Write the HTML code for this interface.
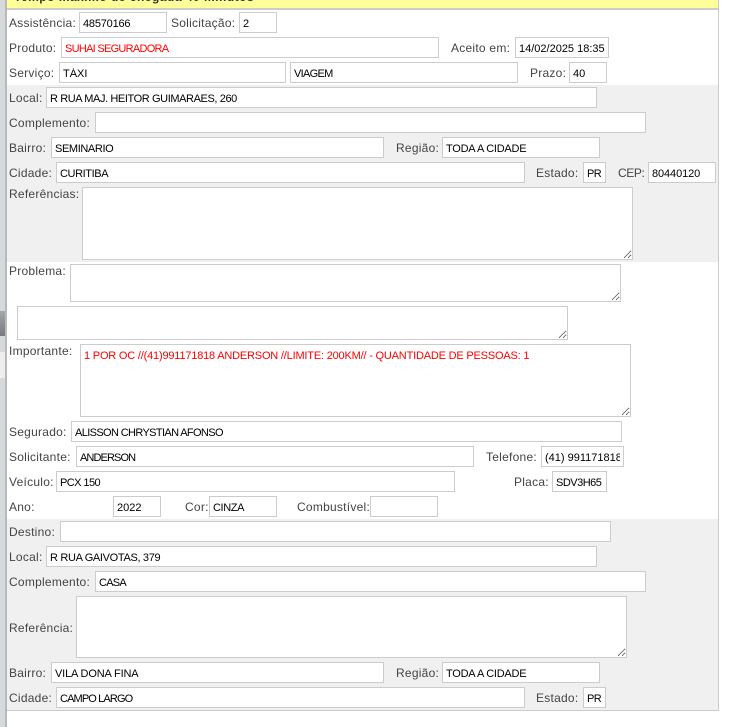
<!DOCTYPE html>
<html lang="pt-BR"><head><meta charset="utf-8"><title>Assistência</title>
<style>
html,body{margin:0;padding:0;width:749px;height:727px;overflow:hidden;background:#fff}
body{position:relative;font:12px "Liberation Sans",sans-serif;color:#444}
div,label,input,textarea{position:absolute;box-sizing:border-box}
label{white-space:nowrap;line-height:14px;letter-spacing:.25px}
input,textarea{margin:0;border:1px solid #ccc;background:#fff;color:#000;font:11px "Liberation Sans",sans-serif;padding:2px 3px 0;outline:0;border-radius:0}
textarea{padding:5px 3px 3px;resize:both;overflow:hidden}
.r{color:#f00}
</style></head><body>
<div style="left:0;top:0;width:5px;height:727px;background:#d6dadc"></div>
<div style="left:5px;top:0;width:2px;height:727px;background:#b9b9b9"></div>
<div style="left:0;top:311px;width:5px;height:25px;background:linear-gradient(#a4a8ad,#767a80)"></div>
<div style="left:0;top:352px;width:5px;height:26px;background:#eee"></div>
<div style="left:718px;top:0;width:1px;height:711px;background:#ccc"></div>
<div style="left:7px;top:0;width:711px;height:8px;background:#ff9;overflow:hidden"><div style="left:7px;top:-10px;font-weight:bold;font-size:12px;line-height:14px;white-space:nowrap;color:#333;letter-spacing:.5px">Tempo máximo de chegada 40 minutos</div></div>
<div style="left:7px;top:8px;width:711px;height:2px;background:#ccc"></div>
<div style="left:7px;top:85px;width:711px;height:177px;background:#f0f0f0"></div>
<div style="left:7px;top:519px;width:711px;height:191px;background:#f0f0f0"></div>
<div style="left:7px;top:710px;width:712px;height:1px;background:#ccc"></div>

<label style="left:9px;top:16px">Assistência:</label><input style="left:79px;top:12px;width:88px;height:21px;letter-spacing:-.2px" value="48570166">
<label style="left:171px;top:16px">Solicitação:</label><input style="left:239px;top:12px;width:38px;height:21px" value="2">

<label style="left:9px;top:41px">Produto:</label><input class="r" style="left:61px;top:37px;width:378px;height:21px;letter-spacing:-.72px" value="SUHAI SEGURADORA">
<label style="left:451px;top:41px">Aceito em:</label><input style="left:515px;top:37px;width:94px;height:21px" value="14/02/2025 18:35">

<label style="left:9px;top:66px">Serviço:</label><input style="left:59px;top:62px;width:227px;height:21px" value="TÁXI">
<input style="left:290px;top:62px;width:228px;height:21px;letter-spacing:-.7px" value="VIAGEM">
<label style="left:530px;top:66px">Prazo:</label><input style="left:569px;top:62px;width:38px;height:21px" value="40">

<label style="left:9px;top:91px">Local:</label><input style="left:46px;top:87px;width:551px;height:21px;letter-spacing:-.4px" value="R RUA MAJ. HEITOR GUIMARAES, 260">
<label style="left:9px;top:116px">Complemento:</label><input style="left:95px;top:112px;width:551px;height:21px">
<label style="left:9px;top:141px">Bairro:</label><input style="left:51px;top:137px;width:333px;height:21px;letter-spacing:-.38px" value="SEMINARIO">
<label style="left:396px;top:141px">Região:</label><input style="left:442px;top:137px;width:158px;height:21px;letter-spacing:-.25px" value="TODA A CIDADE">
<label style="left:9px;top:166px">Cidade:</label><input style="left:56px;top:162px;width:469px;height:21px;letter-spacing:-.4px" value="CURITIBA">
<label style="left:536px;top:166px">Estado:</label><input style="left:583px;top:162px;width:23px;height:21px;letter-spacing:-.6px" value="PR">
<label style="left:618px;top:166px;letter-spacing:-.4px">CEP:</label><input style="left:648px;top:162px;width:68px;height:21px;letter-spacing:-.1px" value="80440120">
<label style="left:9px;top:187px">Referências:</label><textarea style="left:82px;top:187px;width:551px;height:73px"></textarea>

<label style="left:9px;top:264px">Problema:</label><textarea style="left:70px;top:264px;width:551px;height:38px"></textarea>
<textarea style="left:17px;top:306px;width:551px;height:34px"></textarea>
<label style="left:9px;top:344px">Importante:</label><textarea class="r" style="left:80px;top:344px;width:551px;height:73px;letter-spacing:-.19px">1 POR OC //(41)991171818 ANDERSON //LIMITE: 200KM// - QUANTIDADE DE PESSOAS: 1</textarea>
<label style="left:9px;top:425px">Segurado:</label><input style="left:71px;top:421px;width:551px;height:21px;letter-spacing:-.63px" value="ALISSON CHRYSTIAN AFONSO">
<label style="left:9px;top:450px">Solicitante:</label><input style="left:76px;top:446px;width:398px;height:21px;letter-spacing:-.9px" value="ANDERSON">
<label style="left:486px;top:450px">Telefone:</label><input style="left:541px;top:446px;width:83px;height:21px" value="(41) 991171818">
<label style="left:9px;top:475px">Veículo:</label><input style="left:56px;top:471px;width:399px;height:21px;letter-spacing:-.57px" value="PCX 150">
<label style="left:514px;top:475px">Placa:</label><input style="left:552px;top:471px;width:55px;height:21px;letter-spacing:-.5px" value="SDV3H65">
<label style="left:9px;top:500px">Ano:</label><input style="left:113px;top:496px;width:48px;height:21px" value="2022">
<label style="left:185px;top:500px">Cor:</label><input style="left:209px;top:496px;width:68px;height:21px;letter-spacing:-.4px" value="CINZA">
<label style="left:297px;top:500px">Combustível:</label><input style="left:370px;top:496px;width:68px;height:21px">

<label style="left:9px;top:525px">Destino:</label><input style="left:60px;top:521px;width:551px;height:21px">
<label style="left:9px;top:550px">Local:</label><input style="left:46px;top:546px;width:551px;height:21px;letter-spacing:-.33px" value="R RUA GAIVOTAS, 379">
<label style="left:9px;top:575px">Complemento:</label><input style="left:95px;top:571px;width:551px;height:21px;letter-spacing:-.75px" value="CASA">
<label style="left:9px;top:621px">Referência:</label><textarea style="left:76px;top:596px;width:551px;height:62px"></textarea>
<label style="left:9px;top:666px">Bairro:</label><input style="left:51px;top:662px;width:333px;height:21px;letter-spacing:-.15px" value="VILA DONA FINA">
<label style="left:396px;top:666px">Região:</label><input style="left:442px;top:662px;width:158px;height:21px;letter-spacing:-.25px" value="TODA A CIDADE">
<label style="left:9px;top:691px">Cidade:</label><input style="left:56px;top:687px;width:469px;height:21px;letter-spacing:-.87px" value="CAMPO LARGO">
<label style="left:536px;top:691px">Estado:</label><input style="left:583px;top:687px;width:23px;height:21px;letter-spacing:-.6px" value="PR">
</body></html>
